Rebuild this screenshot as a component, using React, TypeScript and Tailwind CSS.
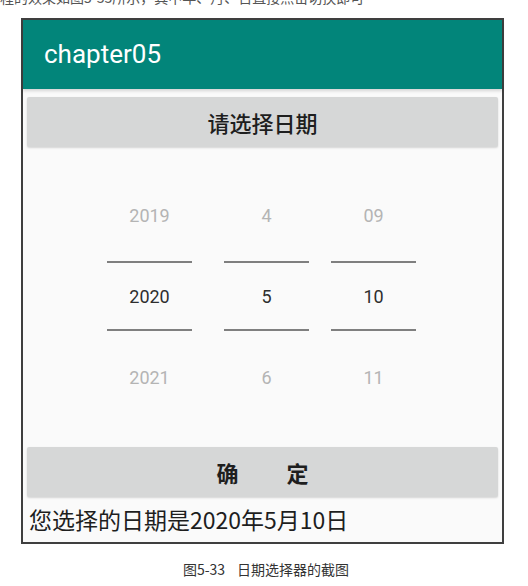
const cjk = { fontFamily: '"Noto Sans CJK SC", "Noto Sans", sans-serif' };
const roboto = { fontFamily: 'Roboto, "Noto Sans CJK SC", sans-serif' };

const columns = [
  { prev: "2019", cur: "2020", next: "2021" },
  { prev: "4", cur: "5", next: "6" },
  { prev: "09", cur: "10", next: "11" },
];

function PickerColumn({ prev, cur, next }: { prev: string; cur: string; next: string }) {
  return (
    <div className="flex w-[85px] flex-col items-center pt-[57px] text-[18px]" style={roboto}>
      <div className="h-[24px] leading-[24px] text-[#b4b4b4]">{prev}</div>
      <div className="mt-[33px] h-[2px] w-full bg-[#7f7f7f]" />
      <div className="mt-[22px] h-[24px] leading-[24px] text-[#2e2e2e]">{cur}</div>
      <div className="mt-[20px] h-[2px] w-full bg-[#7f7f7f]" />
      <div className="mt-[35px] h-[24px] leading-[24px] text-[#b4b4b4]">{next}</div>
    </div>
  );
}

export default function App() {
  return (
    <div className="relative h-[586px] w-[528px] overflow-hidden bg-white">
      {/* clipped line of the book text above the figure */}
      <div className="h-[7px] overflow-hidden">
        <div className="-mt-[10px] whitespace-nowrap text-[14px] leading-[14px] text-[#555]" style={cjk}>
          程的效果如图5-33所示，其中年、月、日直接点击切换即可
        </div>
      </div>

      {/* phone screen */}
      <div className="ml-[21px] mt-[11px] h-[526px] w-[483px] border-2 border-[#3f3f3f] bg-[#fafafa]">
        <div className="flex h-[69px] items-center bg-[#02857a] pl-[21px] text-[26px] text-white shadow-[0_2px_3px_rgba(0,0,0,0.15)]" style={roboto}>
          chapter05
        </div>

        <div className="px-[4px]">
          <div
            className="mt-[8px] flex h-[50px] items-center justify-center rounded-[2px] bg-[#d6d7d7] text-[22px] font-medium text-[#1e1e1e] shadow-[0_1px_2px_rgba(0,0,0,0.15)]"
            style={cjk}
          >
            请选择日期
          </div>

          <div className="flex h-[300px] pl-[80px]">
            <PickerColumn {...columns[0]} />
            <div className="ml-[32px]">
              <PickerColumn {...columns[1]} />
            </div>
            <div className="ml-[22px]">
              <PickerColumn {...columns[2]} />
            </div>
          </div>

          <div
            className="flex h-[50px] items-center justify-center rounded-[2px] bg-[#d6d7d7] text-[22px] font-bold text-[#1e1e1e] shadow-[0_1px_2px_rgba(0,0,0,0.15)]"
            style={cjk}
          >
            <span>确</span>
            <span className="ml-[48px]">定</span>
          </div>

          <div className="mt-[6px] pl-[2px] text-[23px] leading-[32px] text-[#1e1e1e]" style={cjk}>
            您选择的日期是2020年5月10日
          </div>
        </div>
      </div>

      <div className="mt-[15px] text-center text-[14px] text-[#333]" style={cjk}>
        <span className="pl-[4px]">图5-33</span>
        <span className="ml-[12px]">日期选择器的截图</span>
      </div>
    </div>
  );
}
